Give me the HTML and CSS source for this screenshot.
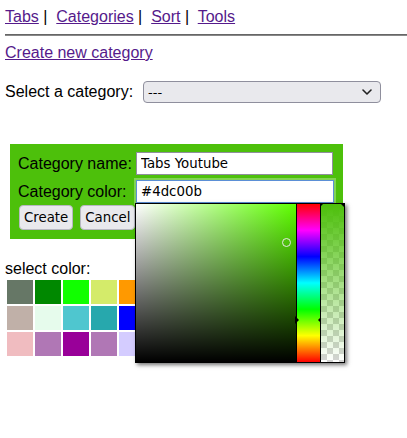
FILE: index.html
```html
<!DOCTYPE html>
<html>
<head>
<meta charset="utf-8">
<link rel="stylesheet" href="styles.css">
</head>
<body>
<nav class="nav"><a href="#">Tabs</a> |&nbsp; <a href="#">Categories</a> |&nbsp; <a href="#">Sort</a> |&nbsp; <a href="#">Tools</a></nav>
<hr class="rule">
<a class="create" href="#">Create new category</a>
<div class="select-row">
  <label class="select-label">Select a category:</label>
  <div class="select-wrap">
    <select class="select"><option>---</option></select>
    <svg class="chev" width="10" height="6" viewBox="0 0 10 6"><path d="M1 1 L5 5 L9 1" fill="none" stroke="#222" stroke-width="1.6" stroke-linecap="round" stroke-linejoin="round"/></svg>
  </div>
</div>
<form class="cat-form">
  <label class="lbl">Category name:</label><input class="txt" type="text" value="Tabs Youtube">
  <label class="lbl">Category color:</label><input class="txt focused" type="text" value="#4dc00b">
  <div class="buttons"><button type="button" class="btn">Create</button><button type="button" class="btn">Cancel</button></div>
</form>
<div class="select-color">select color:</div>
<div class="swatches">
  <span class="sw" style="background:#667766"></span>
  <span class="sw" style="background:#008800"></span>
  <span class="sw" style="background:#11ff00"></span>
  <span class="sw" style="background:#d4eb6a"></span>
  <span class="sw" style="background:#ff9900"></span>
  <span class="sw" style="background:#ff3333"></span>
  <span class="sw" style="background:#cc0000"></span>
  <span class="sw" style="background:#884400"></span>
  <span class="sw" style="background:#c0b0a8"></span>
  <span class="sw" style="background:#e6fbec"></span>
  <span class="sw" style="background:#4fc6cf"></span>
  <span class="sw" style="background:#27a8ad"></span>
  <span class="sw" style="background:#0000ff"></span>
  <span class="sw" style="background:#3366cc"></span>
  <span class="sw" style="background:#003399"></span>
  <span class="sw" style="background:#222222"></span>
  <span class="sw" style="background:#f0bcc0"></span>
  <span class="sw" style="background:#b077b5"></span>
  <span class="sw" style="background:#990099"></span>
  <span class="sw" style="background:#b077b5"></span>
  <span class="sw" style="background:#d4ccff"></span>
  <span class="sw" style="background:#ffccee"></span>
  <span class="sw" style="background:#ffff66"></span>
  <span class="sw" style="background:#999999"></span>
</div>
<div class="picker">
  <div class="sv"><span class="sv-dot"></span></div>
  <div class="hue"><span class="mk mk-l"></span><span class="mk mk-r"></span></div>
  <div class="alpha"><div class="alpha-fill"></div><span class="amk amk-l"></span><span class="amk amk-r"></span></div>
</div>
</body>
</html>
```

FILE: styles.css
```css
html, body {
  background: #fff;
}
body {
  margin: 8px 0 0 5px;
  font-family: "Liberation Sans", Arial, sans-serif;
  font-size: 16px;
  color: #000;
  line-height: normal;
}
a {
  color: #551a8b;
}
.nav {
  height: 18px;
  line-height: 18px;
  white-space: nowrap;
}
.rule {
  margin: 8px 0;
  border: 0;
  border-top: 1px solid #666;
  border-bottom: 1px solid #888;
  height: 0;
}
.create {
  display: block;
  width: max-content;
  height: 18px;
  line-height: 18px;
  margin-top: 1px;
}
.select-row {
  margin-top: 19px;
  display: flex;
  align-items: center;
  height: 22px;
}
.select-label {
  margin-right: 10px;
}
.select-wrap {
  position: relative;
  width: 238px;
  height: 22px;
}
.select {
  appearance: none;
  -webkit-appearance: none;
  width: 238px;
  height: 22px;
  margin: 0;
  padding: 0 0 0 4px;
  border: 1px solid #8f8f9d;
  border-radius: 4px;
  background: #e9e9ed;
  font-family: "DejaVu Sans", sans-serif;
  font-size: 13px;
  color: #000;
}
.chev {
  position: absolute;
  right: 9px;
  top: 8px;
}
.cat-form {
  margin: 41px 0 0 5px;
  width: 317px;
  padding: 8px 8px 9px;
  background: #4dc00b;
  display: grid;
  grid-template-columns: 118px 197px;
  row-gap: 5px;
  align-items: center;
}
.lbl {
  white-space: nowrap;
}
.txt {
  box-sizing: border-box;
  width: 197px;
  height: 23px;
  margin: 0;
  padding: 0 4px;
  border: 1px solid #8f8f9d;
  background: #fff;
  font-family: "DejaVu Sans", sans-serif;
  font-size: 13.33px;
  color: #000;
  outline: none;
}
.txt.focused {
  width: 198px;
  border-color: #5b8fd6;
  box-shadow: 0 0 0 2px rgba(255, 255, 255, 0.3);
}
.buttons {
  grid-column: 1 / 3;
  display: flex;
  gap: 7px;
  margin-top: -3px;
  margin-left: 1px;
}
.btn {
  box-sizing: border-box;
  height: 25px;
  margin: 0;
  padding: 0 4px;
  border: 1px solid #b8b8c2;
  border-radius: 4px;
  background: #e9e9ed;
  font-family: "DejaVu Sans", sans-serif;
  font-size: 13.33px;
  color: #000;
}
.select-color {
  margin-top: 21px;
  height: 18px;
  line-height: 18px;
}
.swatches {
  margin-top: 2px;
  padding-left: 2px;
  display: grid;
  grid-template-columns: repeat(8, 26px);
  grid-auto-rows: 24px;
  gap: 2px;
}
.sw {
  display: block;
}
.picker {
  position: absolute;
  left: 135px;
  top: 203px;
  display: flex;
  border: 1px solid #000;
  background: #fff;
  box-shadow: 2px 2px 4px rgba(0, 0, 0, 0.55);
}
.sv {
  position: relative;
  width: 160px;
  height: 158px;
  background:
    linear-gradient(to top, #000, rgba(0, 0, 0, 0)),
    linear-gradient(to right, #fff, #5eff00);
}
.sv-dot {
  position: absolute;
  left: 146px;
  top: 34px;
  width: 7px;
  height: 7px;
  border: 1.5px solid #e8e8e8;
  border-radius: 50%;
}
.hue {
  position: relative;
  width: 23px;
  border-left: 1px solid #000;
  background: linear-gradient(to top, #ff0000 0%, #ffff00 16.67%, #00ff00 33.33%, #00ffff 50%, #0000ff 66.67%, #ff00ff 83.33%, #ff0000 100%);
}
.mk {
  position: absolute;
  top: 112px;
  width: 0;
  height: 0;
  border-top: 4px solid transparent;
  border-bottom: 4px solid transparent;
}
.mk-l {
  left: -2px;
  border-left: 4px solid #000;
}
.mk-r {
  right: -2px;
  border-right: 4px solid #000;
}
.alpha {
  position: relative;
  width: 23px;
  border-left: 1px solid #000;
  background-color: #fff;
  background-image: conic-gradient(#d4d4d4 25%, #fff 0 50%, #d4d4d4 0 75%, #fff 0);
  background-size: 12px 12px;
}
.alpha-fill {
  position: absolute;
  inset: 0;
  background: linear-gradient(to bottom, #4dc00b, rgba(77, 192, 11, 0));
}
.amk {
  position: absolute;
  top: -1px;
  width: 0;
  height: 0;
  border-top: 4px solid #000;
}
.amk-l {
  left: -1px;
  border-right: 4px solid transparent;
}
.amk-r {
  right: 0;
  border-left: 4px solid transparent;
}
```
